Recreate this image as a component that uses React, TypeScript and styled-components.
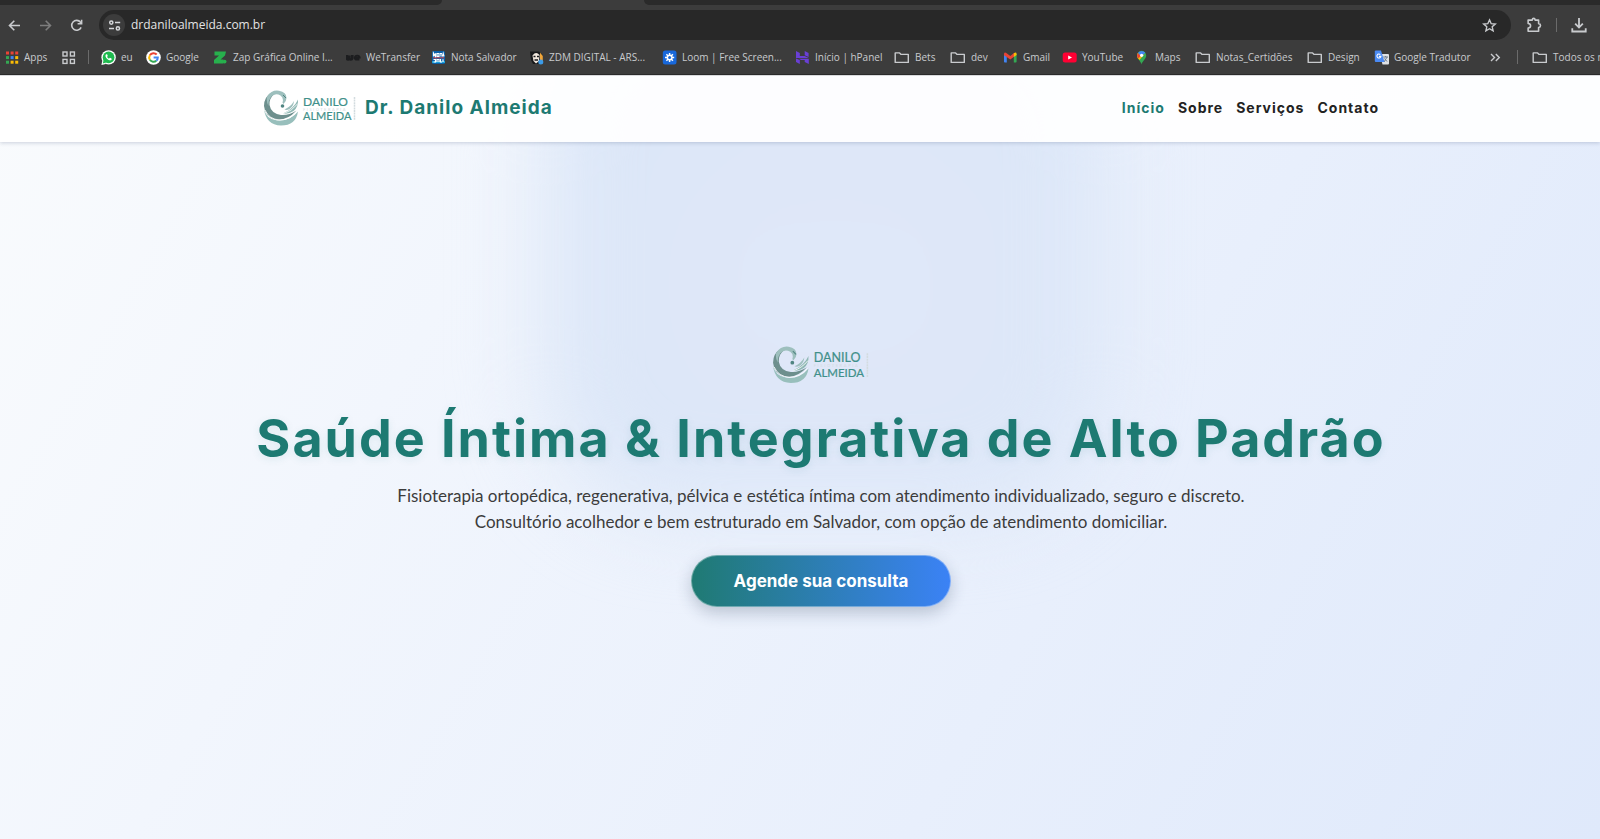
import React from "react";
import styled, { createGlobalStyle, css } from "styled-components";

const GlobalStyle = createGlobalStyle`
  *, *::before, *::after { box-sizing: border-box; }
  html, body { margin: 0; padding: 0; }
  body { background: #f4f7fd; overflow-x: hidden; }
`;

const display = `Inter, "Open Sans", sans-serif`;
const chromeFont = `"Open Sans", "Noto Sans", sans-serif`;
const teal = "#1d7a72";
const contentShift = "42px";

const Page = styled.div`
  min-height: 100vh;
  display: flex;
  flex-direction: column;
`;

/* ---------- browser chrome ---------- */

const Chrome = styled.div`
  background: #3c3c3c;
  border-bottom: 1px solid #2a2a2a;
  font-family: ${chromeFont};
  color: #c9cbce;
  overflow: hidden;
`;

const TabStrip = styled.div`
  display: flex;
  height: 5px;
  background: #3c3c3c;
`;

const InactiveTabs = styled.div<{ $side: "left" | "right" }>`
  background: #2a2a2a;
  ${(p) =>
    p.$side === "left"
      ? css`flex: 0 0 442px; border-bottom-right-radius: 8px;`
      : css`flex: 1; margin-left: 202px; border-bottom-left-radius: 8px;`}
`;

const Toolbar = styled.div`
  display: flex;
  align-items: center;
  height: 40px;
  padding: 0 13px 0 6px;
`;

const ToolButton = styled.button<{ $dim?: boolean }>`
  display: flex;
  align-items: center;
  justify-content: center;
  width: 16px;
  height: 16px;
  margin-right: 15px;
  padding: 0;
  border: 0;
  background: none;
  color: ${(p) => (p.$dim ? "#7d7d7d" : "#c9cbce")};
`;

const Omnibox = styled.div`
  flex: 1;
  display: flex;
  align-items: center;
  height: 30px;
  padding: 0 14px 0 4px;
  border-radius: 15px;
  background: #282828;
`;

const SiteInfo = styled.button`
  display: flex;
  align-items: center;
  justify-content: center;
  width: 22px;
  height: 22px;
  padding: 0;
  border: 0;
  border-radius: 50%;
  background: #3c3c3c;
  color: #d5d7da;
`;

const Address = styled.input`
  flex: 1;
  min-width: 0;
  margin-left: 6px;
  padding: 0;
  border: 0;
  outline: 0;
  background: none;
  color: #e3e3e3;
  font: 12px/20px ${chromeFont};
`;

const PlainButton = styled.button`
  display: flex;
  padding: 0;
  border: 0;
  background: none;
  color: #c9cbce;
`;

const ToolbarEnd = styled.div`
  display: flex;
  align-items: center;
  gap: 14px;
  margin-left: 15px;
`;

const Divider = styled.span`
  flex: none;
  width: 1px;
  height: 14px;
  background: #6b6b6b;
`;

const BookmarksBar = styled.nav`
  display: flex;
  align-items: center;
  height: 24px;
  margin-bottom: 5px;
  padding-left: 5px;
`;

const Bookmark = styled.a<{ $width: number; $gap?: number }>`
  flex: 0 0 ${(p) => p.$width}px;
  display: flex;
  align-items: center;
  gap: ${(p) => p.$gap ?? 5}px;
  color: inherit;
  font-size: 10px;
  line-height: 16px;
  text-decoration: none;
  white-space: nowrap;

  svg { flex: none; }
`;

const PinnedEnd = styled.div`
  display: flex;
  margin-right: 12px;
`;

const BarEnd = styled.div`
  display: flex;
  align-items: center;
  gap: 14px;
`;

/* ---------- icons ---------- */

const stroke = { fill: "none", stroke: "currentColor", strokeWidth: 1.4 };

const icons: Record<string, React.ReactNode> = {
  apps: (
    <>
      {["#ea4335", "#ea4335", "#ea4335", "#34a853", "#4285f4", "#fbbc05", "#34a853", "#fbbc05", "#fbbc05"].map((c, i) => (
        <rect key={i} x={1 + (i % 3) * 4.6} y={1.5 + Math.floor(i / 3) * 4.6} width="3" height="3" fill={c} />
      ))}
    </>
  ),
  grid: (
    <g {...stroke}>
      {[[2, 2], [9.4, 2], [2, 9.4], [9.4, 9.4]].map(([x, y]) => (
        <rect key={`${x}-${y}`} x={x} y={y} width="4" height="4" />
      ))}
    </g>
  ),
  whatsapp: (
    <>
      <circle cx="7.6" cy="7.4" r="7.2" fill="#fff" />
      <path d="M.4 15 1.4 10.6 4.8 14Z" fill="#fff" />
      <circle cx="7.6" cy="7.4" r="5.9" fill="#1fba4f" />
      <path d="M1.8 13.4 2.6 10 5.2 12.6Z" fill="#1fba4f" />
      <path d="M5.2 4.2c-1.6 1.4-.2 3.6 1.1 4.8 1.3 1.2 3.4 2 4.4.5l-.2-.9-1.6-.8-.9.9C6.9 8.2 6.5 7.6 6.1 6.7l.7-.8-.7-1.7Z" fill="#fff" />
    </>
  ),
  google: (
    <>
      <circle cx="7.5" cy="7.5" r="7.3" fill="#fff" />
      <g fill="none" strokeWidth="2">
        <path d="M3.9 5.2A4.3 4.3 0 0 1 10.7 4.5" stroke="#ea4335" />
        <path d="M3.9 9.8A4.3 4.3 0 0 1 3.9 5.2" stroke="#fbbc05" />
        <path d="M10.3 10.8A4.3 4.3 0 0 1 3.9 9.8" stroke="#34a853" />
        <path d="M7.6 7.5H11.8A4.3 4.3 0 0 1 10.3 10.8" stroke="#4285f4" />
      </g>
    </>
  ),
  zap: (
    <>
      <path d="M1.5 1.5H13L12 5.5 7.6 9.5H10.5V13.5H1V10L6 5.5H1.5Z" fill="#27b04d" />
      <circle cx="11.6" cy="11.6" r="1.9" fill="#27b04d" />
    </>
  ),
  we: (
    <g fill="none" stroke="#1c1d1f" strokeWidth="2.6">
      <path d="M1 5v3.4q0 1 1.2 1t1.2-1V5.5M3.6 8.4q0 1 1.2 1T6.3 8.2V5" />
      <path d="M8.5 7.6H13.6Q13.4 5.5 11.2 5.6T8.8 7.8Q9 9.7 11.4 9.5H13.4" strokeWidth="1.9" />
    </g>
  ),
  nota: (
    <>
      <rect x="1" y="1" width="13" height="13" rx="1.5" fill="#0b5fa8" />
      <path d="M1 11h13v2H1z" fill="#1aa0dc" />
      <g fill="none" stroke="#fff" strokeWidth="1.2">
        <path d="M2.5 6.5V3.2L4.5 6.5V3.2M6 3.5H8V6.3H6ZM9 3.5H11M10 3.5V6.5M11.4 6.5 12.2 3.5 13 6.5" />
        <path d="M2.5 9.5H4.5V12H2.5M6 12V9.5H8V12M9.5 9V12H11M12 9.3V12" />
      </g>
      <path d="M2 7.8H13" stroke="#e44" strokeWidth=".9" />
    </>
  ),
  zdm: (
    <>
      <path d="M1 1.5H10L13.5 5V11L9 14H4L2 10Z" fill="#17181a" />
      <path d="M11 2.5 13.8 6V11H11Z" fill="#f0a63a" />
      <path d="M3.5 5.5Q7 .8 10.5 5L10 11 7 13.5 4.5 11Z" fill="#f0e6dc" />
      <path d="M4.5 6.5H6.5M8 6.5H10M5.5 10H9" stroke="#18191b" strokeWidth="1.5" />
      <circle cx="11.8" cy="12" r="2.5" fill="#3b9be8" />
    </>
  ),
  loom: (
    <>
      <rect x=".8" y=".5" width="13.7" height="14" rx="2.5" fill="#1868db" />
      <g stroke="#fff" strokeWidth="1.5">
        <path d="M7.6 2.9V12.1M3 7.5H12.2M4.4 4.3 10.9 10.8M10.9 4.3 4.4 10.8" />
      </g>
      <circle cx="7.6" cy="7.5" r="3" fill="#fff" />
      <circle cx="7.6" cy="7.5" r="1.5" fill="#1868db" />
    </>
  ),
  hpanel: (
    <g fill="#6a3fd6">
      <path d="M1 1 4.8 3V6H9.7L13.8 8H1ZM9.7 1 13.6 3V7L9.7 5.2Z" />
      <path d="M1 8.4 4.8 10V14L1 12ZM4 8.8H13.8V14L9.7 12V10H6Z" />
    </g>
  ),
  folder: <path d="M1.2 2.9H5.6L7.1 4.4H14.3V12.4H1.2Z" {...stroke} strokeLinejoin="round" />,
  gmail: (
    <>
      <path d="M1 3.6 3.8 5.7V12.6H1.8Q1 12.6 1 11.8Z" fill="#4285f4" />
      <path d="M10.8 5.7 13.6 3.6V11.8Q13.6 12.6 12.8 12.6H10.8Z" fill="#34a853" />
      <path d="M1 3.9Q1.3 1.9 3.3 2.9L7.3 6 11 3.1V6.7L7.3 9.5 1 5.3Z" fill="#ea4335" />
      <path d="M10.8 3.2Q13.3 1.7 13.6 3.9V5L10.8 7Z" fill="#fbbc05" />
    </>
  ),
  youtube: (
    <>
      <rect x=".7" y="2.5" width="14" height="10" rx="2.5" fill="#f03" />
      <path d="M6.2 5.4 10 7.5 6.2 9.6Z" fill="#fff" />
    </>
  ),
  maps: (
    <>
      <path d="M6.5 14.5C6 11 2 9 2 5.4A4.6 4.6 0 0 1 11.2 5.4C11.2 9 7.1 11 6.5 14.5Z" fill="#34a853" />
      <path d="M2.8 8.2Q1.3 5.5 2.8 3L6.5 5.5 10 3.5 4.5 10Z" fill="#fbbc05" />
      <path d="M2.7 3 6 6 3 8.4Q1.4 5.6 2.7 3Z" fill="#ea4335" />
      <path d="M3 2.7Q6.5-.8 10.3 2.6L6.5 7Z" fill="#4285f4" />
      <circle cx="6.6" cy="5.3" r="1.6" fill="#fff" />
    </>
  ),
  translate: (
    <>
      <path d="M6 4H14Q15 4 15 5V13.5Q15 14.5 14 14.5H8.5Z" fill="#dfe1e5" />
      <path d="M9.2 7H14M11.6 6V7M10 12 13 7.2M10.5 8.5 13 11.5" stroke="#6a7b8c" strokeWidth="1" fill="none" />
      <path d="M1.8.5H7L10.5 12H1.8Q.8 12 .8 11V1.5Q.8.5 1.8.5Z" fill="#4a8af4" />
      <path d="M6.3 4.6A2 2 0 1 0 6.9 6.4H5" fill="none" stroke="#fff" strokeWidth="1.1" />
    </>
  ),
  back: <path d="M13 7.5H2.5M7.3 2.7 2.5 7.5 7.3 12.3" {...stroke} strokeWidth="1.6" />,
  forward: <path d="M2 7.5H12.5M7.7 2.7 12.5 7.5 7.7 12.3" {...stroke} strokeWidth="1.6" />,
  reload: (
    <>
      <path d="M12.1 9.3A4.9 4.9 0 1 1 11.5 4.3L12.6 5.5" {...stroke} strokeWidth="1.6" />
      <path d="M12.6 1.8V5.8H8.6" {...stroke} strokeWidth="1.6" />
    </>
  ),
  tune: (
    <g {...stroke} strokeWidth="1.5">
      <circle cx="4.3" cy="4.6" r="1.6" />
      <path d="M8 4.6H13.2M2 10.4H7" />
      <circle cx="10.9" cy="10.4" r="1.6" />
    </g>
  ),
  star: (
    <path d="M7.5 1.9 9.2 5.7 13.3 6.1 10.2 8.8 11.1 12.9 7.5 10.7 3.9 12.9 4.8 8.8 1.7 6.1 5.8 5.7Z" {...stroke} />
  ),
  puzzle: (
    <path d="M2 2.9H5.8Q6 1.3 7.2 1.3T8.6 2.9H11.8V6.2Q13.6 6.4 13.6 8T11.8 9.8V13.4H2V10.3Q4.3 10.2 4.3 8.2T2 6.1Z" {...stroke} strokeLinejoin="round" strokeWidth="1.5" />
  ),
  download: <path d="M7.5 1V9.8M3.9 6.3 7.5 9.9 11.1 6.3M1.2 10.5V13.6H13.8V10.5" {...stroke} strokeWidth="1.7" />,
  more: <path d="M3 4 6.5 7.5 3 11M7.8 4 11.3 7.5 7.8 11" {...stroke} />,
};

const Icon = ({ name, size = 15 }: { name: string; size?: number }) => (
  <svg width={size} height={size} viewBox="0 0 15 15" aria-hidden="true">
    {icons[name]}
  </svg>
);

const bookmarks: { icon: string; label: string; width: number; gap?: number }[] = [
  { icon: "whatsapp", label: "eu", width: 45 },
  { icon: "google", label: "Google", width: 67 },
  { icon: "zap", label: "Zap Gráfica Online I...", width: 133 },
  { icon: "we", label: "WeTransfer", width: 85 },
  { icon: "nota", label: "Nota Salvador", width: 98 },
  { icon: "zdm", label: "ZDM DIGITAL - ARS...", width: 133 },
  { icon: "loom", label: "Loom | Free Screen...", width: 133 },
  { icon: "hpanel", label: "Início | hPanel", width: 99 },
  { icon: "folder", label: "Bets", width: 56, gap: 6 },
  { icon: "folder", label: "dev", width: 53, gap: 6 },
  { icon: "gmail", label: "Gmail", width: 59 },
  { icon: "youtube", label: "YouTube", width: 73 },
  { icon: "maps", label: "Maps", width: 60 },
  { icon: "folder", label: "Notas_Certidões", width: 112, gap: 6 },
  { icon: "folder", label: "Design", width: 67, gap: 6 },
  { icon: "translate", label: "Google Tradutor", width: 114 },
];

/* ---------- site ---------- */

const Site = styled.div`
  position: relative;
  flex: 1;
  display: flex;
  flex-direction: column;
  overflow: hidden;
  background: linear-gradient(120deg, #f9fbfd 0%, #f2f6fd 28%, #e8effc 66%, #dfe9fb 100%);
`;

const Glow = styled.div`
  position: absolute;
  top: -80px;
  left: 34%;
  width: 35%;
  height: 520px;
  border-radius: 140px;
  background: radial-gradient(circle at 52% 56%, #e0e8f9 0%, #dde7f8 50%, #d8e5f6 100%);
  filter: blur(42px);
`;

const Header = styled.header`
  position: relative;
  height: 67px;
  padding: 0 0 2px ${contentShift};
  background: rgba(255, 255, 255, 0.92);
  border-top: 1px solid #d9dadd;
  box-shadow: 0 1px 4px rgba(40, 60, 100, 0.22);
`;

const HeaderInner = styled.div`
  display: flex;
  align-items: center;
  justify-content: space-between;
  max-width: 1116px;
  height: 100%;
  margin: 0 auto;
`;

const Brand = styled.a`
  display: flex;
  align-items: center;
  gap: 8px;
  color: ${teal};
  font: 700 19px/28px ${display};
  letter-spacing: 1px;
  text-decoration: none;
`;

const Menu = styled.nav`
  display: flex;
  gap: 13px;
`;

const MenuLink = styled.a<{ $active?: boolean }>`
  color: ${(p) => (p.$active ? teal : "#222")};
  font: 700 14px/22px ${display};
  letter-spacing: 1px;
  text-decoration: none;
`;

const Hero = styled.main`
  position: relative;
  flex: 1;
  display: flex;
  flex-direction: column;
  align-items: center;
  justify-content: center;
  padding: 0 0 28px ${contentShift};
  text-align: center;
`;

const Title = styled.h1`
  margin: 23px 0 12px;
  color: ${teal};
  font: 700 52px/64px ${display};
  letter-spacing: 2px;
  text-shadow: 0 2px 8px rgba(29, 122, 114, 0.1);
`;

const Lead = styled.p`
  max-width: 900px;
  margin: 0 0 20px;
  color: #3c3c3c;
  font: 17px/26px Lato, sans-serif;
  font-variant-ligatures: none;
`;

const CallToAction = styled.button`
  height: 52px;
  padding: 0 42px;
  border: 1px solid rgba(255, 255, 255, 0.35);
  border-radius: 26px;
  background: linear-gradient(90deg, #1f7a72, #3b82f6) border-box;
  box-shadow: 0 6px 16px rgba(30, 50, 80, 0.24);
  color: #fff;
  font: 700 17px/24px ${display};
`;

const LogoMark = styled.svg`
  flex: none;
  font: 400 12px Lato, sans-serif;
  letter-spacing: 0;
`;

const Logo = ({ width }: { width: number }) => (
  <LogoMark width={width} viewBox="0 0 94 36" role="img" aria-label="Danilo Almeida Fisioterapia">
    <path d="M1 19Q3 29 14 30.5 27 31.5 35 21.5 33 35.5 18 35.5 3 35 1 19Z" fill="#98bfbc" />
    <path d="M8 3Q1 7 1 16 2 27 13 29.5 24 31 33.5 20.5 26 25.5 18 25 8 23.5 6.5 15 6 8 12 3.5Z" fill="#6d8f8d" />
    <path d="M4 6.5Q9-.5 16 .8 23.500 2 23.500 8 23.500 11 20.500 14L19.500 12.500Q21 8 17.500 5.500 12 2.500 8 7 5 11 5.500 16 3 11.500 4 6.500Z" fill="#9dbfbd" />
    <path d="M20 23.5Q31 18.5 35 9.5 35.5 17 30.5 21 25.5 24.5 20 23.5Z" fill="#8fb8b4" />
    <path d="M21.5 19.5Q28 16.5 31 11 30.5 16.5 26.5 19 23.5 20.5 21.5 19.5Z" fill="#9dbfbd" />
    <path d="M2 20Q6 29.5 17 30 27 30 34 21.5M20 24Q29 21 34.5 14" fill="none" stroke="#fff" strokeWidth="0.8" />
    <circle cx="19.5" cy="16" r="1.8" fill="#4f8481" />
    <path d="M20 5 23 8" stroke="#4f8481" strokeWidth="1" />
    <g fill="#3f908a" stroke="#3f908a" strokeWidth="0.2">
      <text x="40" y="15.5" fontSize="12">DANILO</text>
      <text x="40" y="30" fontSize="11">ALMEIDA</text>
    </g>
    <text x="40" y="20.5" fontSize="4" letterSpacing="1.5" fill="#d3dcdf">FISIOTERAPIA</text>
    <path d="M91.500 7V30" stroke="#d3dcdf" strokeWidth="1.500" strokeDasharray="2 .6" />
  </LogoMark>
);

export default function App() {
  return (
    <Page>
      <GlobalStyle />
      <Chrome>
        <TabStrip>
          <InactiveTabs $side="left" />
          <InactiveTabs $side="right" />
        </TabStrip>
        <Toolbar>
          <ToolButton aria-label="Voltar"><Icon name="back" /></ToolButton>
          <ToolButton aria-label="Avançar" $dim><Icon name="forward" /></ToolButton>
          <ToolButton aria-label="Recarregar"><Icon name="reload" /></ToolButton>
          <Omnibox>
            <SiteInfo aria-label="Informações do site"><Icon name="tune" /></SiteInfo>
            <Address aria-label="Endereço" defaultValue="drdaniloalmeida.com.br" />
            <PlainButton aria-label="Favoritar"><Icon name="star" /></PlainButton>
          </Omnibox>
          <ToolbarEnd>
            <PlainButton aria-label="Extensões"><Icon name="puzzle" size={16} /></PlainButton>
            <Divider />
            <PlainButton aria-label="Downloads"><Icon name="download" size={16} /></PlainButton>
          </ToolbarEnd>
        </Toolbar>
        <BookmarksBar aria-label="Favoritos">
          <Bookmark href="#apps" $width={56} $gap={4}><Icon name="apps" />Apps</Bookmark>
          <Bookmark href="#grupos" aria-label="Grupos de guias" $width={27}><Icon name="grid" /></Bookmark>
          <PinnedEnd><Divider /></PinnedEnd>
          {bookmarks.map((b) => (
            <Bookmark key={b.label} href="#favorito" $width={b.width} $gap={b.gap}>
              <Icon name={b.icon} />
              {b.label}
            </Bookmark>
          ))}
          <BarEnd>
            <PlainButton aria-label="Mais favoritos"><Icon name="more" /></PlainButton>
            <Divider />
            <Bookmark href="#todos" $width={120} $gap={6}><Icon name="folder" />Todos os marcadores</Bookmark>
          </BarEnd>
        </BookmarksBar>
      </Chrome>
      <Site>
        <Glow />
        <Header>
          <HeaderInner>
            <Brand href="#inicio"><Logo width={94} />Dr. Danilo Almeida</Brand>
            <Menu>
              <MenuLink href="#inicio" $active>Início</MenuLink>
              <MenuLink href="#sobre">Sobre</MenuLink>
              <MenuLink href="#servicos">Serviços</MenuLink>
              <MenuLink href="#contato">Contato</MenuLink>
            </Menu>
          </HeaderInner>
        </Header>
        <Hero>
          <Logo width={98} />
          <Title>Saúde Íntima &amp; Integrativa de Alto Padrão</Title>
          <Lead>
            Fisioterapia ortopédica, regenerativa, pélvica e estética íntima com atendimento individualizado, seguro e discreto.
            Consultório acolhedor e bem estruturado em Salvador, com opção de atendimento domiciliar.
          </Lead>
          <CallToAction type="button">Agende sua consulta</CallToAction>
        </Hero>
      </Site>
    </Page>
  );
}
